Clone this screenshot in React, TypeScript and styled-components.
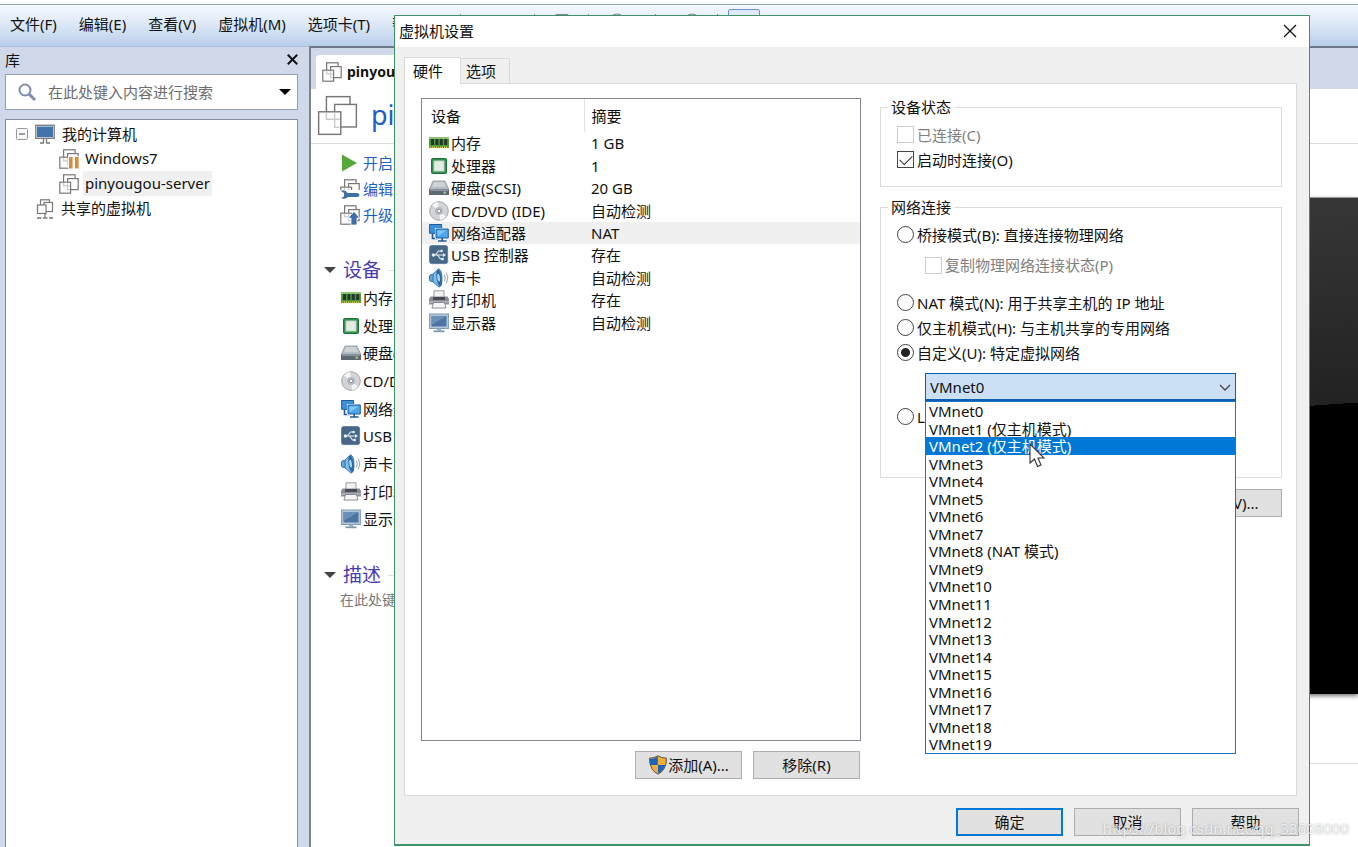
import React, { useState } from "react";
import styled, { createGlobalStyle } from "styled-components";

const GlobalStyle = createGlobalStyle`
  * { box-sizing: border-box; }
  body {
    margin: 0;
    background: #fff;
    color: #111;
    font-family: "Noto Sans", "Noto Sans CJK SC", sans-serif;
    font-size: 15px;
    line-height: 20px;
  }
  button, input, select { font: inherit; color: inherit; }
  ul { list-style: none; margin: 0; padding: 0; }
  svg { display: block; flex: none; }
`;

/* ---------- icons ---------- */

type IconName =
  | "memory" | "cpu" | "disk" | "cd" | "network" | "usb" | "sound" | "printer" | "display"
  | "vm" | "vmLarge" | "vmPaused" | "vmEdit" | "vmUpgrade" | "shared" | "computer" | "play" | "shield";

const VmSquares = ({ weight = 1.2 }: { weight?: number }) => (
  <g fill="#fff" stroke="#777" strokeWidth={weight}>
    <rect x="4.6" y="0.8" width="11.5" height="11" />
    <rect x="8.6" y="4.6" width="10.6" height="11" />
    <rect x="0.8" y="8.2" width="10.8" height="11" />
    <path d="M4.6 8.700v3.100h6.500M8.600 8.700v7H11" stroke="#ccc" fill="none" />
  </g>
);

const shapes: Record<IconName, React.ReactNode> = {
  memory: (
    <>
      <path d="M0 4h20v11H0z" fill="#4d9a3c" />
      <path d="M0 4h20v2H0z" fill="#8cc474" />
      <path d="M2 6h3v6H2zM6.4 6h3v6h-3zM10.8 6h3v6h-3zM15.2 6h3v6h-3z" fill="#23382a" />
      <path d="M1 14.4h8.6M11 14.4h8" stroke="#d9c95c" strokeWidth="1.8" strokeDasharray="1 1" />
    </>
  ),
  cpu: (
    <>
      <rect x="2.5" y="2.5" width="15" height="15" rx="1" fill="#2e9150" stroke="#1c7239" />
      <rect x="5" y="5" width="10" height="10" fill="#e5ebe3" stroke="#c2d8c4" />
    </>
  ),
  disk: (
    <>
      <path d="M4 3h12l4 9H0z" fill="#b5bcc4" stroke="#8f979f" strokeWidth=".8" />
      <path d="M5 4h10l2 5H3z" fill="#ccd2d8" />
      <path d="M0 11.5h20V17H0z" fill="#5d6874" />
      <path d="M1 12.5h18" stroke="#8d97a1" />
      <rect x="14.5" y="13.6" width="2.5" height="2" fill="#a5d055" />
    </>
  ),
  cd: (
    <>
      <circle cx="10" cy="10" r="9.3" fill="#d2d4d8" stroke="#a0a4aa" />
      <path d="M10 10 3 4.5A9 9 0 0 1 9 1zM10 10l7 5.5A9 9 0 0 1 11 19z" fill="#f6f6f8" />
      <circle cx="10" cy="10" r="4" fill="#b7babf" />
      <circle cx="10" cy="10" r="1.8" fill="#fff" stroke="#83878d" strokeWidth=".8" />
    </>
  ),
  network: (
    <>
      <path d="M.6 1.5h12v8.8H.6z" fill="#3d91d8" stroke="#215c94" />
      <path d="M3.5 10.5v5h5" fill="none" stroke="#215c94" strokeWidth="1.6" />
      <path d="M7 6h12.3v9H7z" fill="#4ba5ec" stroke="#fff" strokeWidth="2" />
      <path d="M7 6h12.3v9H7z" fill="#4ba5ec" stroke="#215c94" />
      <path d="M8.5 7.5h9L9 13z" fill="#83c7f7" />
      <path d="M9 18h8.5M13.2 15v3" stroke="#215c94" strokeWidth="1.6" />
    </>
  ),
  usb: (
    <>
      <rect x=".6" y=".6" width="18" height="18" rx="2" fill="#466787" stroke="#5f7e9c" />
      <path d="M3.5 10h12M6.5 10l3-4h3M8.5 10l3 4h2" fill="none" stroke="#e6edf4" strokeWidth="1.2" />
      <circle cx="4.4" cy="10" r="1.7" fill="#e6edf4" />
      <path d="M14 8l3 2-3 2z" fill="#e6edf4" />
      <circle cx="12.6" cy="6" r="1.3" fill="#e6edf4" />
      <path d="M12.4 12.800h2.400v2.400h-2.400z" fill="#e6edf4" />
    </>
  ),
  sound: (
    <>
      <path d="M1 7l4-1v8l-4-1q-1.400-3 0-6z" fill="#65a8d9" stroke="#1d568a" strokeWidth=".8" />
      <path d="M4 6 9.500 .8Q13 2 13 10t-3 9.200L4 14z" fill="#7dbcec" stroke="#2a679c" strokeWidth=".8" />
      <ellipse cx="10.200" cy="10" rx="2.700" ry="8.600" fill="#2d6ba5" transform="rotate(-8 10.200 10)" />
      <ellipse cx="9.600" cy="9.600" rx="1.300" ry="4" fill="#a5d6f5" transform="rotate(-8 9.600 9.600)" />
      <path d="M15.300 6.500q2 3.500 0 7M17.300 4.500q3 5.500 0 11" fill="none" stroke="#96a3ae" />
    </>
  ),
  printer: (
    <>
      <path d="M5 .8h10V8H5z" fill="#f2f2f4" stroke="#888" strokeWidth=".8" />
      <path d="M1.500 6.500h17L20 9v5.500H0V9z" fill="#8b8d97" />
      <path d="M4 7h12v3H4z" fill="#474a53" />
      <path d="M0 11h20v2H0z" fill="#a9abb4" />
      <path d="M4.500 12.500h11L17 18H3z" fill="#f5f5f7" stroke="#77777f" strokeWidth=".8" />
    </>
  ),
  display: (
    <>
      <rect x=".6" y="1" width="18.800" height="14.500" fill="#b4c8dc" stroke="#7f9ab6" />
      <rect x="2.500" y="3" width="15" height="10.500" fill="#4d75a3" />
      <path d="M2.500 3h15L2.500 12z" fill="#6a90ba" />
      <path d="M8 15.500h4v2H8z" fill="#92a9c1" />
      <path d="M4.500 18.300h11" stroke="#7d97b3" strokeWidth="1.800" />
    </>
  ),
  computer: (
    <>
      <rect x=".8" y="1.300" width="18.400" height="13" fill="#fff" stroke="#777" strokeWidth="1.300" />
      <rect x="2" y="2.500" width="16" height="10.600" fill="#3f74ad" />
      <path d="M8.500 14v4.500M11.500 14v4.500M5 19h4M11 19h4" stroke="#777" strokeWidth="1.300" />
    </>
  ),
  vm: <VmSquares />,
  vmLarge: <VmSquares weight={0.7} />,
  vmPaused: (
    <>
      <VmSquares />
      <path d="M9 7h11v13H9z" fill="#fff" />
      <path d="M10 8h3.600v11.500H10zM16 8h3.600v11.500H16z" fill="#d58b3c" />
    </>
  ),
  vmEdit: (
    <>
      <VmSquares />
      <path d="M0 11h20v9H0z" fill="#fff" />
      <path d="M1 12q4-2 6.500 2H17q2.500.200 2.500 2T17 18H8q-3 3-7 1l3-1.500v-3.500z" fill="#3d6fa9" />
    </>
  ),
  vmUpgrade: (
    <>
      <VmSquares />
      <path d="M14 6.500l6 6.500h-3v7h-6v-7H8z" fill="#3d6fa9" stroke="#fff" strokeWidth=".8" />
    </>
  ),
  shared: (
    <>
      <g fill="#fff" stroke="#777" strokeWidth="1.200">
        <rect x="5.500" y=".8" width="9" height="9" />
        <rect x="9" y="3.500" width="8.500" height="9" />
        <rect x="2.500" y="6" width="8.500" height="8.500" />
      </g>
      <path d="M10 14.500v3.500M2 19h4.500M8 19h4.500M14 19h4" stroke="#777" strokeWidth="1.300" />
    </>
  ),
  play: <path d="M2 1.500 17 10 2 18.500z" fill="#56a83a" />,
  shield: (
    <>
      <path d="M10 .8q3.500 2.400 8.500 2.400 0 12-8.500 16Q1.500 15.200 1.500 3.200 6.500 3.200 10 .8z" fill="#f5ad32" stroke="#555" />
      <path d="M9.800 1.800V10H2.300q-.6-3-.4-6Q6 4 9.800 1.800zM10 10h7.300q-1.800 5.800-7.300 8.500z" fill="#1c64b9" />
    </>
  ),
};

const Icon = ({ name, size = 20 }: { name: IconName; size?: number }) => (
  <svg width={size} height={size} viewBox="0 0 20 20" aria-hidden="true">{shapes[name]}</svg>
);

/* ---------- main window ---------- */

const Window = styled.div`
  position: relative;
  display: flex;
  flex-direction: column;
  min-height: 100vh;
  overflow: hidden;
`;
const MenuBar = styled.nav`
  display: flex;
  align-items: stretch;
  height: 42px;
  margin-top: 4px;
  padding-left: 10px;
  gap: 22px;
  border-top: 1px solid #8fa9c4;
  background: linear-gradient(#f5f9fe, #dbe7f6 50%, #b9cee9);
`;
const MenuItem = styled.button`
  border: 0;
  padding: 0 0 3px;
  background: none;
  white-space: nowrap;
`;
const Toolbar = styled.div`
  display: flex;
  align-items: flex-start;
  margin-left: -4px;
  padding-top: 4px;
`;
const ToolToggle = styled.button`
  width: 32px;
  height: 32px;
  border: 1px solid #6f93cf;
  border-radius: 2px;
  background: #dfe9f8;
`;
const Body = styled.div`
  flex: 1;
  display: flex;
  background: #cfd9ea;
`;
const Sidebar = styled.aside`
  width: 309px;
  flex: none;
  display: flex;
  flex-direction: column;
  padding: 0 11px 0 5px;
  border-top: 1px solid #a9c1e2;
`;
const SidebarHead = styled.header`
  display: flex;
  align-items: center;
  justify-content: space-between;
  height: 27px;
  padding-bottom: 2px;
`;
const PlainButton = styled.button`
  display: flex;
  align-items: center;
  justify-content: center;
  border: 0;
  padding: 0;
  background: none;
`;
const SearchBox = styled.div`
  display: flex;
  align-items: center;
  height: 36px;
  padding: 0 6px 0 11px;
  border: 1px solid #999fa8;
  background: #fff;
`;
const SearchInput = styled.input`
  flex: 1;
  min-width: 0;
  margin-left: 11px;
  padding: 0;
  border: 0;
  outline: 0;
  background: none;
  &::placeholder { color: #6d6d6d; opacity: 1; }
`;
const Tree = styled.ul`
  && { margin-top: 9px; padding: 1px 0 0 10px; }
  flex: 1;
  border: 1px solid #868e9a;
  border-bottom: 0;
  background: #fff;
`;
const TreeRow = styled.li<{ $level: number }>`
  display: flex;
  align-items: center;
  height: 25px;
  padding-left: ${(p) => 19 + p.$level * 24}px;
  gap: 4px;
`;
const RootRow = styled(TreeRow)`
  padding-left: 0;
  gap: 7px;
`;
const TreeLabel = styled.span<{ $selected?: boolean }>`
  padding: 2px;
  line-height: 21px;
  background: ${(p) => (p.$selected ? "#f0f0f0" : "none")};
`;
const Main = styled.main`
  flex: 1;
  min-width: 0;
  display: flex;
  flex-direction: column;
  border-left: 2px solid #7c838f;
  border-top: 2px solid #6d7989;
  background: #fff;
`;
const TabStrip = styled.div`
  display: flex;
  align-items: flex-end;
  height: 41px;
  padding-left: 5px;
  background: #cfd9ea;
`;
const VmTab = styled.button`
  display: flex;
  align-items: center;
  gap: 5px;
  height: 34px;
  padding: 0 12px 0 6px;
  border: 0;
  border-radius: 4px 0 0 0;
  background: #fff;
  font-size: 14px;
  font-weight: 700;
`;
const VmTitle = styled.header`
  display: flex;
  align-items: center;
  gap: 13px;
  height: 55px;
  padding: 0 0 2px 6px;
  border-bottom: 1px solid #dcdcdc;
  h1 { margin: 0; font-size: 27px; font-weight: 400; line-height: 40px; color: #1c5fc6; }
`;
const Columns = styled.div`
  display: flex;
  flex: 1;
`;
const Details = styled.div`
  width: 560px;
  flex: none;
  padding: 6px 20px 0 13px;
`;
const Commands = styled.ul`
  && { padding-left: 16px; }
`;
const CommandRow = styled.li`
  a {
    display: flex;
    align-items: center;
    gap: 3px;
    height: 26px;
    color: #1c5fc6;
    text-decoration: none;
  }
`;
const SectionHead = styled.h2`
  display: flex;
  align-items: center;
  gap: 7px;
  height: 26px;
  margin: 0;
  font-size: 19px;
  font-weight: 400;
  color: #4a3bb0;
  &::after { content: ""; flex: 1; height: 1px; background: #dcdfe6; }
`;
const DeviceSection = styled.section`
  padding-top: 29px;
`;
const DeviceSummary = styled.ul`
  display: flex;
  flex-direction: column;
  height: 249px;
  && { margin-top: 1px; padding-left: 17px; }
  li { flex: 1; display: flex; align-items: center; gap: 2px; }
`;
const Description = styled.p`
  margin: 2px 0 0 16px;
  color: #777;
  font-size: 14px;
`;
const PreviewColumn = styled.div`
  flex: 1;
  padding-top: 53px;
`;
const Preview = styled.div`
  height: 497px;
  border-top: 1px solid #9a9a9a;
  background: linear-gradient(176deg, #3a3a3a, #222 45%, #000 45%);
  box-shadow: 0 2px 4px #777;
`;
const PreviewDivider = styled.hr`
  margin: 69px 0 0;
  border: 0;
  border-top: 1px solid #dedede;
`;

/* ---------- settings dialog ---------- */

const Dialog = styled.section`
  position: absolute;
  inset: 15px 48px 1px 394px;
  display: flex;
  flex-direction: column;
  border: 1px solid #3d9268;
  border-bottom-width: 2px;
  background: #f0f0f0;
`;
const TitleBar = styled.header`
  display: flex;
  align-items: center;
  justify-content: space-between;
  height: 31px;
  padding: 0 12px 2px 4px;
  background: #fff;
  h2 { margin: 0; font-size: 15px; font-weight: 400; line-height: 20px; }
`;
const Tabs = styled.div`
  display: flex;
  align-items: flex-end;
  height: 36px;
  padding-left: 9px;
`;
const Tab = styled.button<{ $active?: boolean }>`
  position: relative;
  z-index: ${(p) => (p.$active ? 1 : 0)};
  width: ${(p) => (p.$active ? 57 : 49)}px;
  height: ${(p) => (p.$active ? 27 : 25)}px;
  margin-bottom: ${(p) => (p.$active ? -1 : 0)}px;
  padding: 0 ${(p) => (p.$active ? 8 : 5)}px;
  border: 1px solid #dadada;
  border-bottom: 0;
  border-left-width: ${(p) => (p.$active ? 1 : 0)}px;
  background: ${(p) => (p.$active ? "#fff" : "#f0f0f0")};
  text-align: left;
`;
const Panel = styled.div`
  flex: 1;
  display: flex;
  gap: 19px;
  margin: 0 12px 0 9px;
  padding: 14px 14px 16px 16px;
  border: 1px solid #dadada;
  background: #fff;
`;
const LeftPane = styled.div`
  width: 440px;
  flex: none;
  display: flex;
  flex-direction: column;
`;
const ListFrame = styled.div`
  flex: 1;
  border: 1px solid #828790;
`;
const DeviceTable = styled.table`
  width: 100%;
  height: 235px;
  border-collapse: collapse;
  table-layout: fixed;
  th, td { padding: 0 0 0 7px; text-align: left; font-weight: 400; }
  th:first-child { width: 162px; padding-left: 9px; border-right: 1px solid #e2e2e2; }
  thead tr { height: 33px; }
`;
const DeviceRow = styled.tr<{ $selected: boolean }>`
  td { background: ${(p) => (p.$selected ? "#f0f0f0" : "none")}; }
`;
const DeviceName = styled.div`
  display: flex;
  align-items: center;
  gap: 2px;
`;
const ButtonRow = styled.div`
  display: flex;
  justify-content: flex-end;
  gap: 11px;
`;
const ListButtons = styled(ButtonRow)`
  padding: 10px 1px 0 0;
`;
const Footer = styled(ButtonRow)`
  height: 48px;
  padding: 12px 10px 0;
`;
const Button = styled.button<{ $primary?: boolean }>`
  display: flex;
  align-items: center;
  justify-content: center;
  width: 107px;
  height: 28px;
  padding: 0;
  border: ${(p) => (p.$primary ? "2px solid #0078d7" : "1px solid #adadad")};
  background: #e1e1e1;
`;
const RightPane = styled.div`
  flex: 1;
  min-width: 0;
`;
const Group = styled.fieldset<{ $tall?: boolean }>`
  min-width: 0;
  height: ${(p) => (p.$tall ? 280 : 89)}px;
  margin: 0 0 11px;
  padding: 6px 0 0 16px;
  border: 1px solid #dcdcdc;
  legend { margin-left: -9px; padding: 0 3px; line-height: 18px; }
`;
const Option = styled.label<{ $indent?: boolean; $disabled?: boolean }>`
  display: flex;
  align-items: center;
  gap: 3px;
  height: ${(p) => (p.$indent ? 43 : 25)}px;
  padding: 0 0 ${(p) => (p.$indent ? 7 : 0)}px ${(p) => (p.$indent ? 28 : 0)}px;
  color: ${(p) => (p.$disabled ? "#808080" : "inherit")};
  white-space: nowrap;
`;
const Check = styled.input`
  appearance: none;
  flex: none;
  width: 17px;
  height: 17px;
  margin: 0;
  border: 1px solid #444;
  background: #fff;
  &:disabled { border-color: #ccc; }
  &:checked::after {
    content: "";
    display: block;
    width: 11px;
    height: 6px;
    margin: 3px 0 0 2px;
    border-left: 1px solid #333;
    border-bottom: 1px solid #333;
    transform: rotate(-45deg);
  }
`;
const Radio = styled.input`
  appearance: none;
  flex: none;
  width: 17px;
  height: 17px;
  margin: 0;
  border: 1px solid #444;
  border-radius: 50%;
  background: #fff;
  &:checked { background: radial-gradient(circle, #222 4px, #fff 5px); }
`;
const Combo = styled.div`
  position: relative;
  margin: 8px 45px 3px 28px;
`;
const ComboSelect = styled.select`
  display: block;
  appearance: none;
  width: 100%;
  height: 28px;
  padding: 0 4px;
  border: 1px solid #0b5fae;
  border-bottom-width: 2px;
  border-radius: 0;
  background: #cce0f5;
`;
const Chevron = styled.svg`
  position: absolute;
  top: 11px;
  right: 5px;
  pointer-events: none;
`;
const Options = styled.ul`
  position: absolute;
  z-index: 2;
  top: 28px;
  left: 0;
  right: 0;
  height: 353px;
  display: flex;
  flex-direction: column;
  border: 1px solid #1a74c8;
  background: #fff;
`;
const OptionItem = styled.li<{ $active: boolean }>`
  flex: 1;
  min-height: 0;
  padding-left: 3px;
  line-height: 18px;
  background: ${(p) => (p.$active ? "#0078d7" : "none")};
  color: ${(p) => (p.$active ? "#fff" : "inherit")};
`;
const Pointer = styled.svg`
  position: absolute;
  z-index: 3;
  left: 104px;
  top: 70px;
`;
const Watermark = styled.div`
  position: absolute;
  right: 9px;
  bottom: 9px;
  color: rgba(255, 255, 255, 0.8);
  text-shadow: 0 0 2px rgba(0, 0, 0, 0.35);
  pointer-events: none;
`;

const menus = ["文件(F)", "编辑(E)", "查看(V)", "虚拟机(M)", "选项卡(T)", "帮助(H)"];

const devices: { icon: IconName; name: string; summary: string }[] = [
  { icon: "memory", name: "内存", summary: "1 GB" },
  { icon: "cpu", name: "处理器", summary: "1" },
  { icon: "disk", name: "硬盘(SCSI)", summary: "20 GB" },
  { icon: "cd", name: "CD/DVD (IDE)", summary: "自动检测" },
  { icon: "network", name: "网络适配器", summary: "NAT" },
  { icon: "usb", name: "USB 控制器", summary: "存在" },
  { icon: "sound", name: "声卡", summary: "自动检测" },
  { icon: "printer", name: "打印机", summary: "存在" },
  { icon: "display", name: "显示器", summary: "自动检测" },
];

const commands: { icon: IconName; label: string }[] = [
  { icon: "play", label: "开启此虚拟机" },
  { icon: "vmEdit", label: "编辑虚拟机设置" },
  { icon: "vmUpgrade", label: "升级此虚拟机" },
];

const suffixes: Record<number, string> = { 1: " (仅主机模式)", 2: " (仅主机模式)", 8: " (NAT 模式)" };
const networks = Array.from({ length: 20 }, (_, i) => `VMnet${i}${suffixes[i] ?? ""}`);

const Triangle = ({ color = "#444" }: { color?: string }) => (
  <svg width="12" height="6" viewBox="0 0 12 6" aria-hidden="true"><path d="M0 0h12L6 6z" fill={color} /></svg>
);

const Cross = ({ size, weight }: { size: number; weight: number }) => (
  <svg width={size} height={size} viewBox="0 0 14 14" aria-hidden="true">
    <path d="M1 1l12 12M13 1L1 13" stroke="#111" strokeWidth={weight} />
  </svg>
);

export default function App() {
  const [mode, setMode] = useState("custom");
  const [autoConnect, setAutoConnect] = useState(true);
  const [network, setNetwork] = useState(networks[0]);
  const [selected, setSelected] = useState("网络适配器");
  const [hovered, setHovered] = useState(2);

  const radio = (value: string, label: string) => (
    <Option>
      <Radio type="radio" name="mode" checked={mode === value} onChange={() => setMode(value)} />
      {label}
    </Option>
  );

  return (
    <Window>
      <GlobalStyle />
      <MenuBar>
        {menus.map((m) => <MenuItem key={m}>{m}</MenuItem>)}
        <Toolbar>
          <svg width="268" height="30" viewBox="0 0 268 30" aria-hidden="true">
            <g fill="none" stroke="#7b8796">
              <path d="M.5 5v22M74.500 5v22M128.500 5v22M195.500 5v22M257.500 5v22M96 5.500h12v16H96z" />
              <circle cx="157" cy="14" r="9" />
              <circle cx="232" cy="14" r="9" />
            </g>
          </svg>
          <ToolToggle aria-label="显示库" />
        </Toolbar>
      </MenuBar>
      <Body>
        <Sidebar>
          <SidebarHead>
            库
            <PlainButton aria-label="关闭库"><Cross size={11} weight={2.5} /></PlainButton>
          </SidebarHead>
          <SearchBox>
            <svg width="20" height="20" viewBox="0 0 20 20" fill="none" stroke="#7f8db0" aria-hidden="true">
              <circle cx="8" cy="8" r="5.500" strokeWidth="2" />
              <path d="M12 12l6 6" strokeWidth="3" />
            </svg>
            <SearchInput aria-label="搜索" placeholder="在此处键入内容进行搜索" />
            <PlainButton aria-label="搜索选项"><Triangle color="#000" /></PlainButton>
          </SearchBox>
          <Tree>
            <RootRow $level={0}>
              <svg width="12" height="12" viewBox="0 0 12 12" aria-hidden="true">
                <rect x=".5" y=".5" width="11" height="11" rx="1" fill="#f8f8f8" stroke="#999" />
                <path d="M3 6h6" stroke="#446" />
              </svg>
              <Icon name="computer" />
              <span>我的计算机</span>
            </RootRow>
            <TreeRow $level={1}><Icon name="vmPaused" /><TreeLabel>Windows7</TreeLabel></TreeRow>
            <TreeRow $level={1}><Icon name="vm" /><TreeLabel $selected>pinyougou-server</TreeLabel></TreeRow>
            <TreeRow $level={0}><Icon name="shared" /><TreeLabel>共享的虚拟机</TreeLabel></TreeRow>
          </Tree>
        </Sidebar>
        <Main>
          <TabStrip><VmTab><Icon name="vm" />pinyougou-server</VmTab></TabStrip>
          <VmTitle><Icon name="vmLarge" size={41} /><h1>pinyougou-server</h1></VmTitle>
          <Columns>
            <Details>
              <Commands>
                {commands.map((c) => (
                  <CommandRow key={c.label}><a href="#"><Icon name={c.icon} />{c.label}</a></CommandRow>
                ))}
              </Commands>
              <DeviceSection>
                <SectionHead><Triangle />设备</SectionHead>
                <DeviceSummary>
                  {devices.map((d) => <li key={d.name}><Icon name={d.icon} />{d.name}</li>)}
                </DeviceSummary>
              </DeviceSection>
              <DeviceSection>
                <SectionHead><Triangle />描述</SectionHead>
                <Description>在此处键入对该虚拟机的描述。</Description>
              </DeviceSection>
            </Details>
            <PreviewColumn><Preview /><PreviewDivider /></PreviewColumn>
          </Columns>
        </Main>
      </Body>

      <Dialog role="dialog" aria-label="虚拟机设置">
        <TitleBar>
          <h2>虚拟机设置</h2>
          <PlainButton aria-label="关闭"><Cross size={14} weight={1.3} /></PlainButton>
        </TitleBar>
        <Tabs role="tablist">
          <Tab role="tab" $active>硬件</Tab>
          <Tab role="tab">选项</Tab>
        </Tabs>
        <Panel>
          <LeftPane>
            <ListFrame>
              <DeviceTable>
                <thead><tr><th>设备</th><th>摘要</th></tr></thead>
                <tbody>
                  {devices.map((d) => (
                    <DeviceRow key={d.name} $selected={d.name === selected} onClick={() => setSelected(d.name)}>
                      <td><DeviceName><Icon name={d.icon} />{d.name}</DeviceName></td>
                      <td>{d.summary}</td>
                    </DeviceRow>
                  ))}
                </tbody>
              </DeviceTable>
            </ListFrame>
            <ListButtons>
              <Button><Icon name="shield" />添加(A)...</Button>
              <Button>移除(R)</Button>
            </ListButtons>
          </LeftPane>
          <RightPane>
            <Group>
              <legend>设备状态</legend>
              <Option $disabled><Check type="checkbox" disabled />已连接(C)</Option>
              <Option>
                <Check type="checkbox" checked={autoConnect} onChange={() => setAutoConnect(!autoConnect)} />
                启动时连接(O)
              </Option>
            </Group>
            <Group $tall>
              <legend>网络连接</legend>
              {radio("bridged", "桥接模式(B): 直接连接物理网络")}
              <Option $indent $disabled><Check type="checkbox" disabled />复制物理网络连接状态(P)</Option>
              {radio("nat", "NAT 模式(N): 用于共享主机的 IP 地址")}
              {radio("host", "仅主机模式(H): 与主机共享的专用网络")}
              {radio("custom", "自定义(U): 特定虚拟网络")}
              <Combo>
                <ComboSelect aria-label="特定虚拟网络" value={network} onChange={(e) => setNetwork(e.target.value)}>
                  {networks.map((n) => <option key={n}>{n}</option>)}
                </ComboSelect>
                <Chevron width="12" height="8" viewBox="0 0 12 8" aria-hidden="true">
                  <path d="M1 1l5 5 5-5" fill="none" stroke="#444" strokeWidth="1.300" />
                </Chevron>
                <Options role="listbox" aria-label="虚拟网络列表">
                  {networks.map((n, i) => (
                    <OptionItem
                      key={n}
                      role="option"
                      aria-selected={n === network}
                      $active={i === hovered}
                      onMouseEnter={() => setHovered(i)}
                      onClick={() => setNetwork(n)}
                    >
                      {n}
                    </OptionItem>
                  ))}
                </Options>
                <Pointer width="16" height="25" viewBox="0 0 16 25" aria-hidden="true">
                  <path d="M1 1v19l4.500-4 3 7.500 3.500-1.500-3-7h6z" fill="#fff" stroke="#333" strokeWidth="1.100" />
                </Pointer>
              </Combo>
              {radio("lan", "LAN 区段(L):")}
            </Group>
            <ButtonRow><Button>高级(V)...</Button></ButtonRow>
          </RightPane>
        </Panel>
        <Footer>
          <Button $primary>确定</Button>
          <Button>取消</Button>
          <Button>帮助</Button>
        </Footer>
      </Dialog>
      <Watermark>https://blog.csdn.net/qq_33608000</Watermark>
    </Window>
  );
}
